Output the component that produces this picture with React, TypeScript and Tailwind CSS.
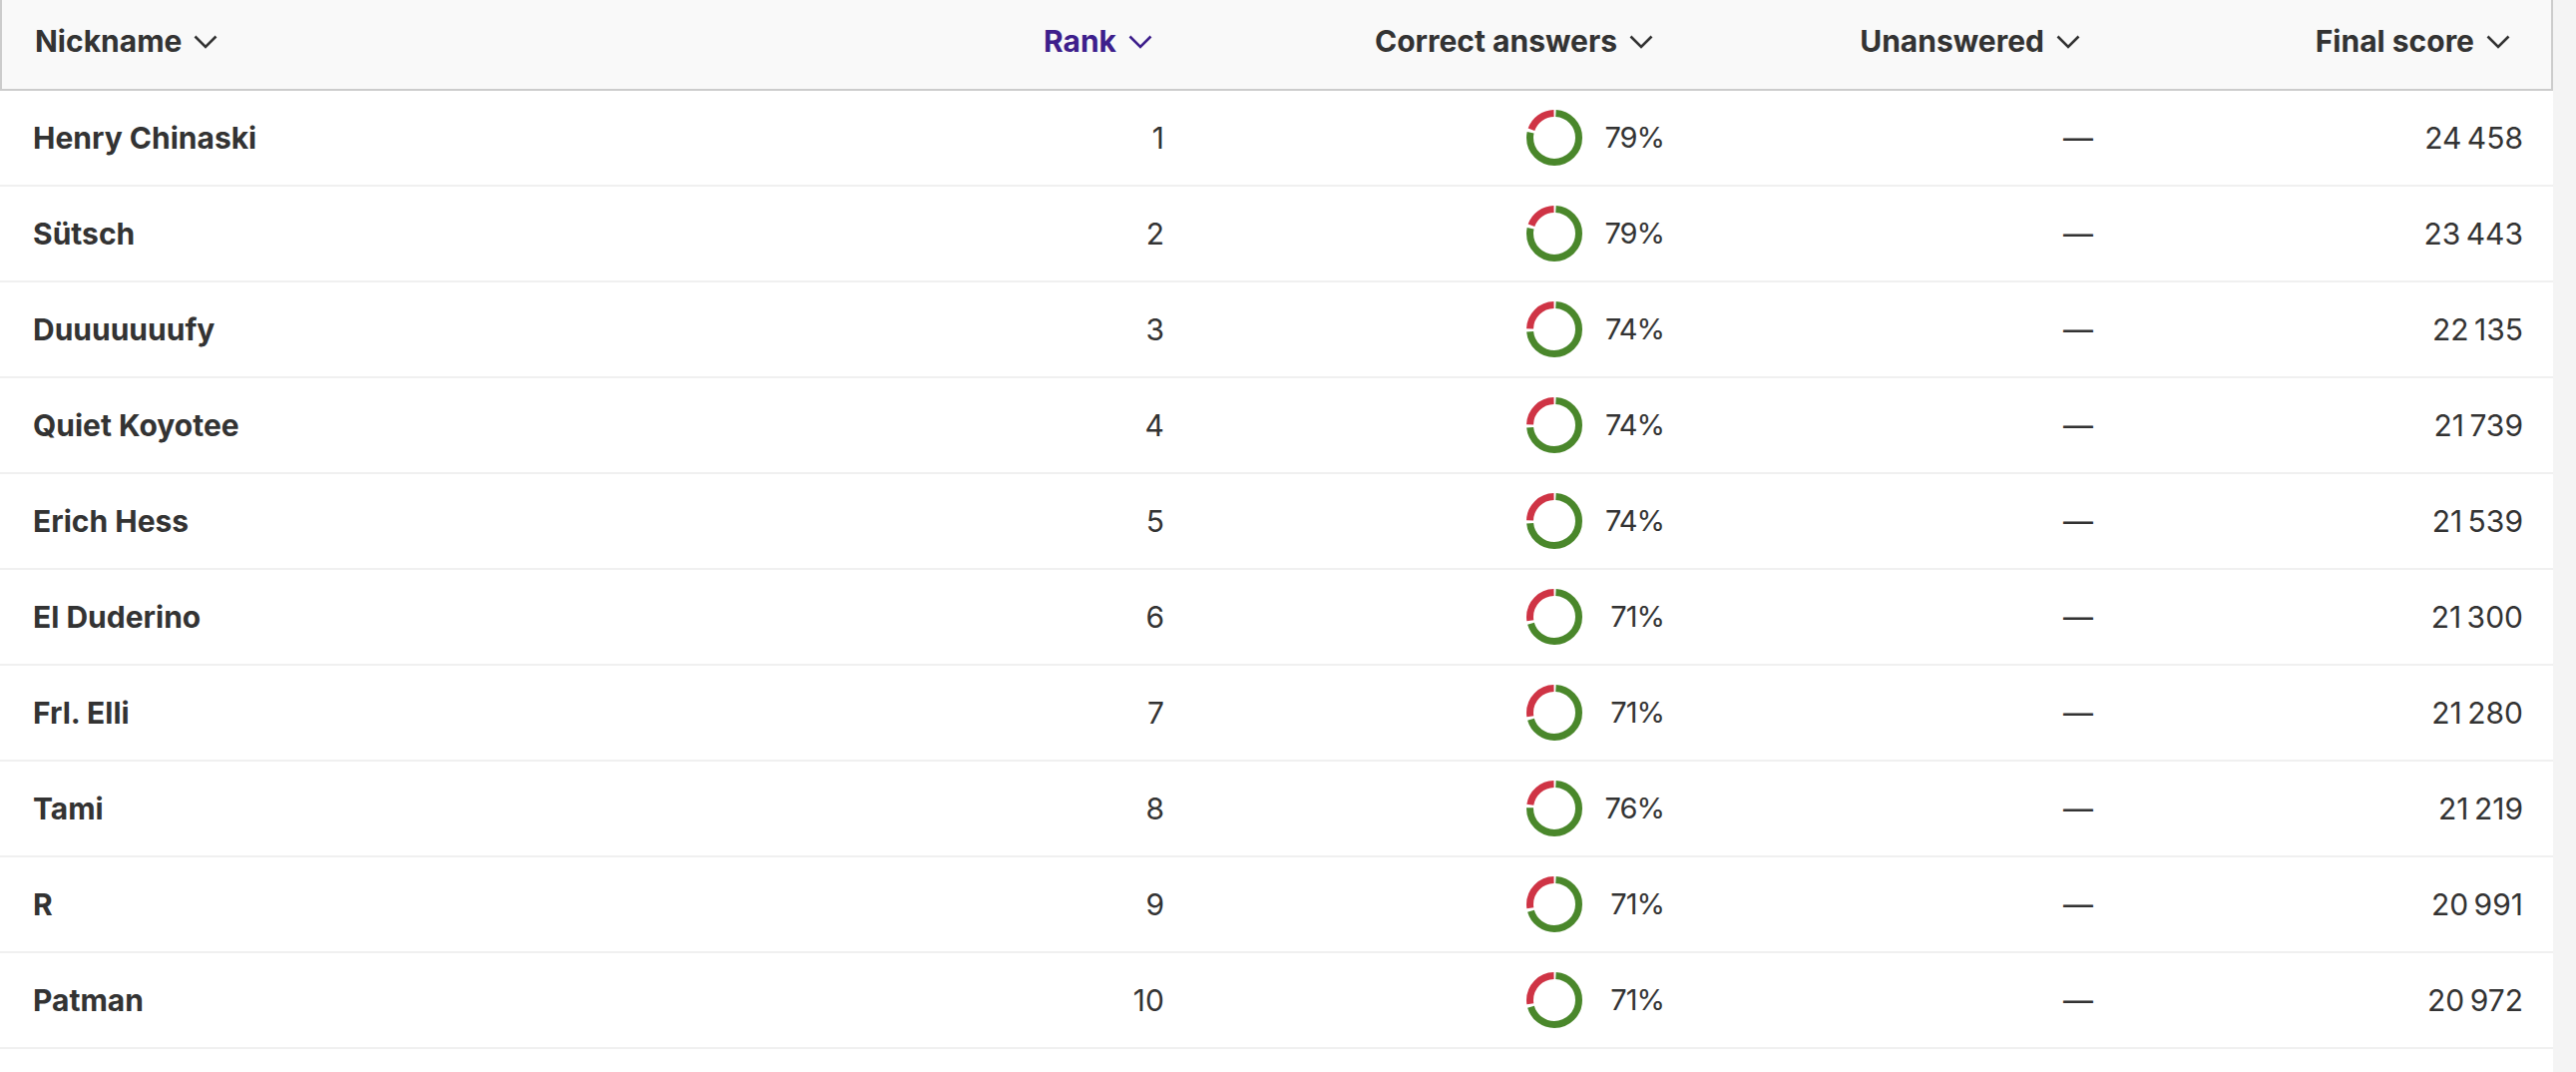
import React from "react";

type Row = { name: string; rank: number; pct: number; score: string };

const rows: Row[] = [
  { name: "Henry Chinaski", rank: 1, pct: 79, score: "24\u202F458" },
  { name: "Sütsch", rank: 2, pct: 79, score: "23\u202F443" },
  { name: "Duuuuuuufy", rank: 3, pct: 74, score: "22\u202F135" },
  { name: "Quiet Koyotee", rank: 4, pct: 74, score: "21\u202F739" },
  { name: "Erich Hess", rank: 5, pct: 74, score: "21\u202F539" },
  { name: "El Duderino", rank: 6, pct: 71, score: "21\u202F300" },
  { name: "Frl. Elli", rank: 7, pct: 71, score: "21\u202F280" },
  { name: "Tami", rank: 8, pct: 76, score: "21\u202F219" },
  { name: "R", rank: 9, pct: 71, score: "20\u202F991" },
  { name: "Patman", rank: 10, pct: 71, score: "20\u202F972" },
];

function Chevron({ color }: { color: string }) {
  return (
    <svg width="24" height="14" viewBox="0 0 24 14" className="ml-[12px] shrink-0">
      <polyline points="1.5,1.5 12,12 22.5,1.5" fill="none" stroke={color} strokeWidth="2.6" />
    </svg>
  );
}

function Donut({ pct }: { pct: number }) {
  const r = 24.5;
  const C = 2 * Math.PI * r;
  const gap = 3;
  const green = (pct / 100) * C;
  const red = C - green;
  return (
    <svg width="56" height="56" viewBox="0 0 56 56" className="shrink-0">
      <g transform="rotate(-90 28 28)">
        <circle
          cx="28"
          cy="28"
          r={r}
          fill="none"
          stroke="#4a872b"
          strokeWidth="7"
          strokeDasharray={`${green - gap} ${C}`}
          strokeDashoffset={-gap / 2}
        />
        <circle
          cx="28"
          cy="28"
          r={r}
          fill="none"
          stroke="#cf3445"
          strokeWidth="7"
          strokeDasharray={`${red - gap} ${C}`}
          strokeDashoffset={-(green + gap / 2)}
        />
      </g>
    </svg>
  );
}

const font = { fontFamily: "Inter, 'Noto Sans', sans-serif" };

export default function App() {
  return (
    <div className="flex w-[2582px] h-[1074px] bg-white text-[#333333] overflow-hidden" style={font}>
      <div className="w-[2559px] shrink-0">
        {/* header */}
        <div className="flex h-[91px] bg-[#f9f9f9] border-l-2 border-r-2 border-b-2 border-[#cccccc] text-[30px] font-bold">
          <div className="w-[898px] flex items-center pl-[33px] pb-[6px]">
            <span>Nickname</span>
            <Chevron color="#333333" />
          </div>
          <div className="w-[293px] flex items-center justify-end pr-[38px] pb-[6px] text-[#3e1f8c]">
            <span>Rank</span>
            <Chevron color="#3e1f8c" />
          </div>
          <div className="w-[505px] flex items-center justify-end pr-[41px] pb-[6px]">
            <span>Correct answers</span>
            <Chevron color="#333333" />
          </div>
          <div className="w-[430px] flex items-center justify-end pr-[43px] pb-[6px]">
            <span>Unanswered</span>
            <Chevron color="#333333" />
          </div>
          <div className="flex-1 flex items-center justify-end pr-[41px] pb-[6px]">
            <span>Final score</span>
            <Chevron color="#333333" />
          </div>
        </div>
        {/* rows */}
        {rows.map((r) => (
          <div key={r.rank} className="flex h-[96px] border-b-2 border-[#f0f0f0] text-[30px]">
            <div className="w-[900px] flex items-center pl-[33px] font-bold">{r.name}</div>
            <div className="w-[293px] flex items-center justify-end pr-[26px]">{r.rank}</div>
            <div className="w-[505px] flex items-center justify-end pr-[30px]">
              <Donut pct={r.pct} />
              <div className="w-[82px] text-right text-[29px] tracking-[-1px]">{r.pct}%</div>
            </div>
            <div className="w-[430px] flex items-center justify-end pr-[30px]">—</div>
            <div className="flex-1 flex items-center justify-end pr-[30px]">{r.score}</div>
          </div>
        ))}
      </div>
      <div className="flex-1 bg-[#f4f4f4]" />
    </div>
  );
}
